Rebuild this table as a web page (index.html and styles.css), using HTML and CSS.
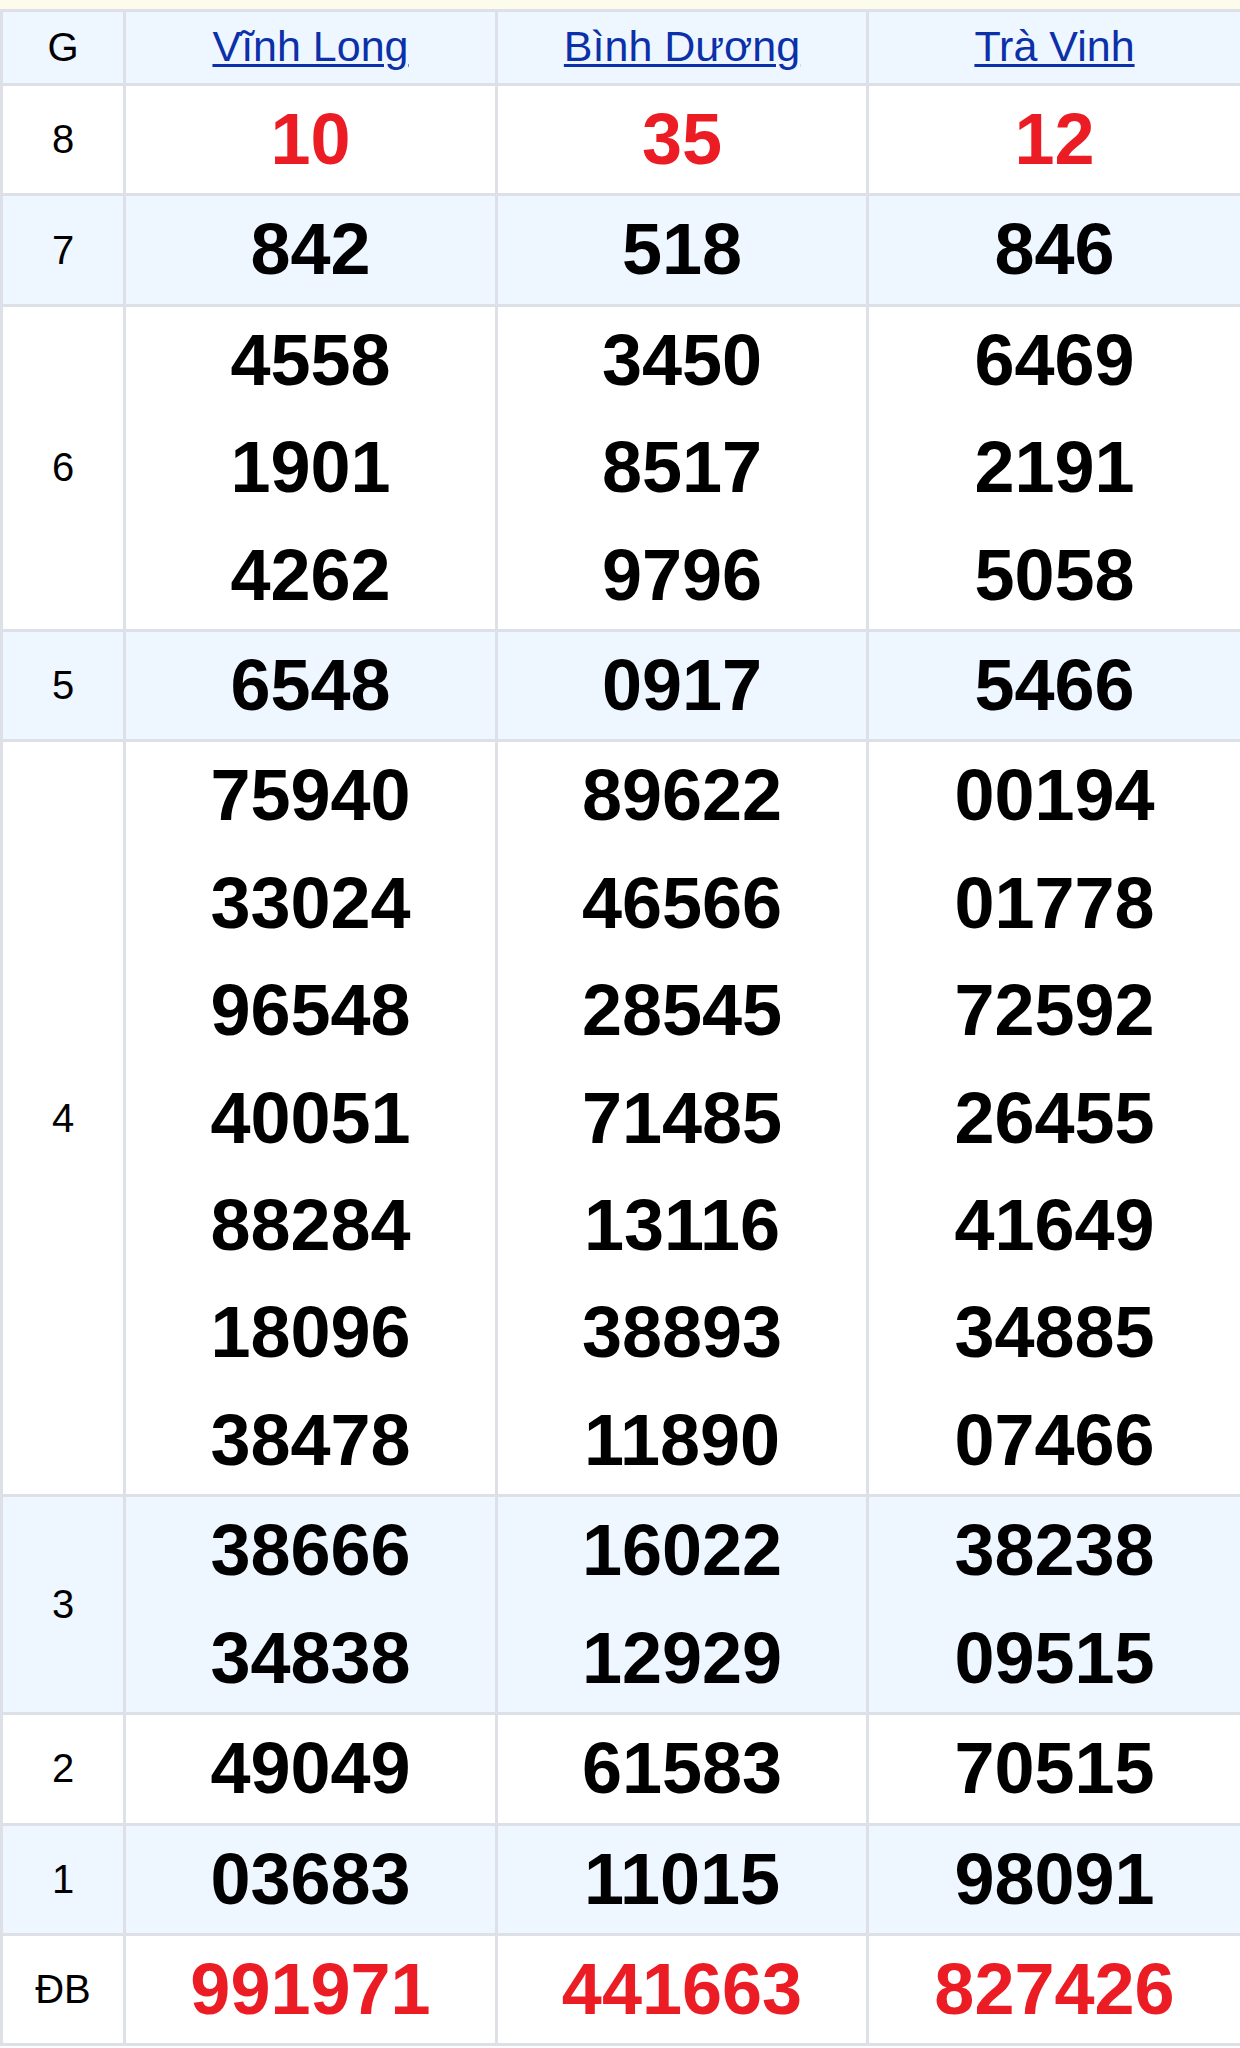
FILE: index.html
```html
<!DOCTYPE html>
<html lang="vi">
<head>
<meta charset="utf-8">
<title>Kết quả xổ số</title>
<link rel="stylesheet" href="styles.css">
</head>
<body>
<div class="topstrip"></div>
<table class="kq">
  <colgroup>
    <col class="c-g">
    <col class="c-p">
    <col class="c-p2">
    <col class="c-p3">
  </colgroup>
  <thead>
    <tr class="alt">
      <th class="lbl">G</th>
      <th class="prov"><a href="#">Vĩnh Long</a></th>
      <th class="prov"><a href="#">Bình Dương</a></th>
      <th class="prov"><a href="#">Trà Vinh</a></th>
    </tr>
  </thead>
  <tbody>
    <tr>
      <td class="lbl">8</td>
      <td class="num red">10</td>
      <td class="num red">35</td>
      <td class="num red">12</td>
    </tr>
    <tr class="alt">
      <td class="lbl">7</td>
      <td class="num">842</td>
      <td class="num">518</td>
      <td class="num">846</td>
    </tr>
    <tr>
      <td class="lbl">6</td>
      <td class="num"><div>4558</div><div>1901</div><div>4262</div></td>
      <td class="num"><div>3450</div><div>8517</div><div>9796</div></td>
      <td class="num"><div>6469</div><div>2191</div><div>5058</div></td>
    </tr>
    <tr class="alt">
      <td class="lbl">5</td>
      <td class="num">6548</td>
      <td class="num">0917</td>
      <td class="num">5466</td>
    </tr>
    <tr>
      <td class="lbl">4</td>
      <td class="num"><div>75940</div><div>33024</div><div>96548</div><div>40051</div><div>88284</div><div>18096</div><div>38478</div></td>
      <td class="num"><div>89622</div><div>46566</div><div>28545</div><div>71485</div><div>13116</div><div>38893</div><div>11890</div></td>
      <td class="num"><div>00194</div><div>01778</div><div>72592</div><div>26455</div><div>41649</div><div>34885</div><div>07466</div></td>
    </tr>
    <tr class="alt">
      <td class="lbl">3</td>
      <td class="num"><div>38666</div><div>34838</div></td>
      <td class="num"><div>16022</div><div>12929</div></td>
      <td class="num"><div>38238</div><div>09515</div></td>
    </tr>
    <tr>
      <td class="lbl">2</td>
      <td class="num">49049</td>
      <td class="num">61583</td>
      <td class="num">70515</td>
    </tr>
    <tr class="alt">
      <td class="lbl">1</td>
      <td class="num">03683</td>
      <td class="num">11015</td>
      <td class="num">98091</td>
    </tr>
    <tr>
      <td class="lbl">ĐB</td>
      <td class="num red">991971</td>
      <td class="num red">441663</td>
      <td class="num red">827426</td>
    </tr>
  </tbody>
</table>
</body>
</html>
```
FILE: styles.css
```css
html, body {
  margin: 0;
  padding: 0;
  background: #ffffff;
}
body {
  font-family: "Liberation Sans", Arial, sans-serif;
  color: #000;
}
.topstrip {
  height: 9px;
  background: #fdfbec;
}
.kq {
  width: 1240px;
  table-layout: fixed;
  border-collapse: collapse;
}
.c-g { width: 123px; }
.c-p { width: 372px; }
.c-p2 { width: 371px; }
.c-p3 { width: 374px; }
.kq th,
.kq td {
  border: 3px solid #dde0e6;
  padding: 0;
  text-align: center;
  vertical-align: middle;
}
.kq tr { background: #ffffff; }
.kq tr.alt { background: #eef6ff; }
.kq thead th {
  height: 68px;
  font-weight: normal;
}
.lbl {
  font-size: 40px;
  font-weight: normal;
}
.kq thead th.prov {
  font-size: 43px;
  padding-bottom: 3px;
}
.prov a {
  color: #0b30a8;
  text-decoration: underline;
  text-decoration-thickness: 3px;
  text-underline-offset: 3px;
}
.num {
  font-size: 72px;
  font-weight: bold;
  line-height: 107.4px;
}
.num div {
  line-height: 107.4px;
}
.red {
  color: #ec1c24;
}
```
